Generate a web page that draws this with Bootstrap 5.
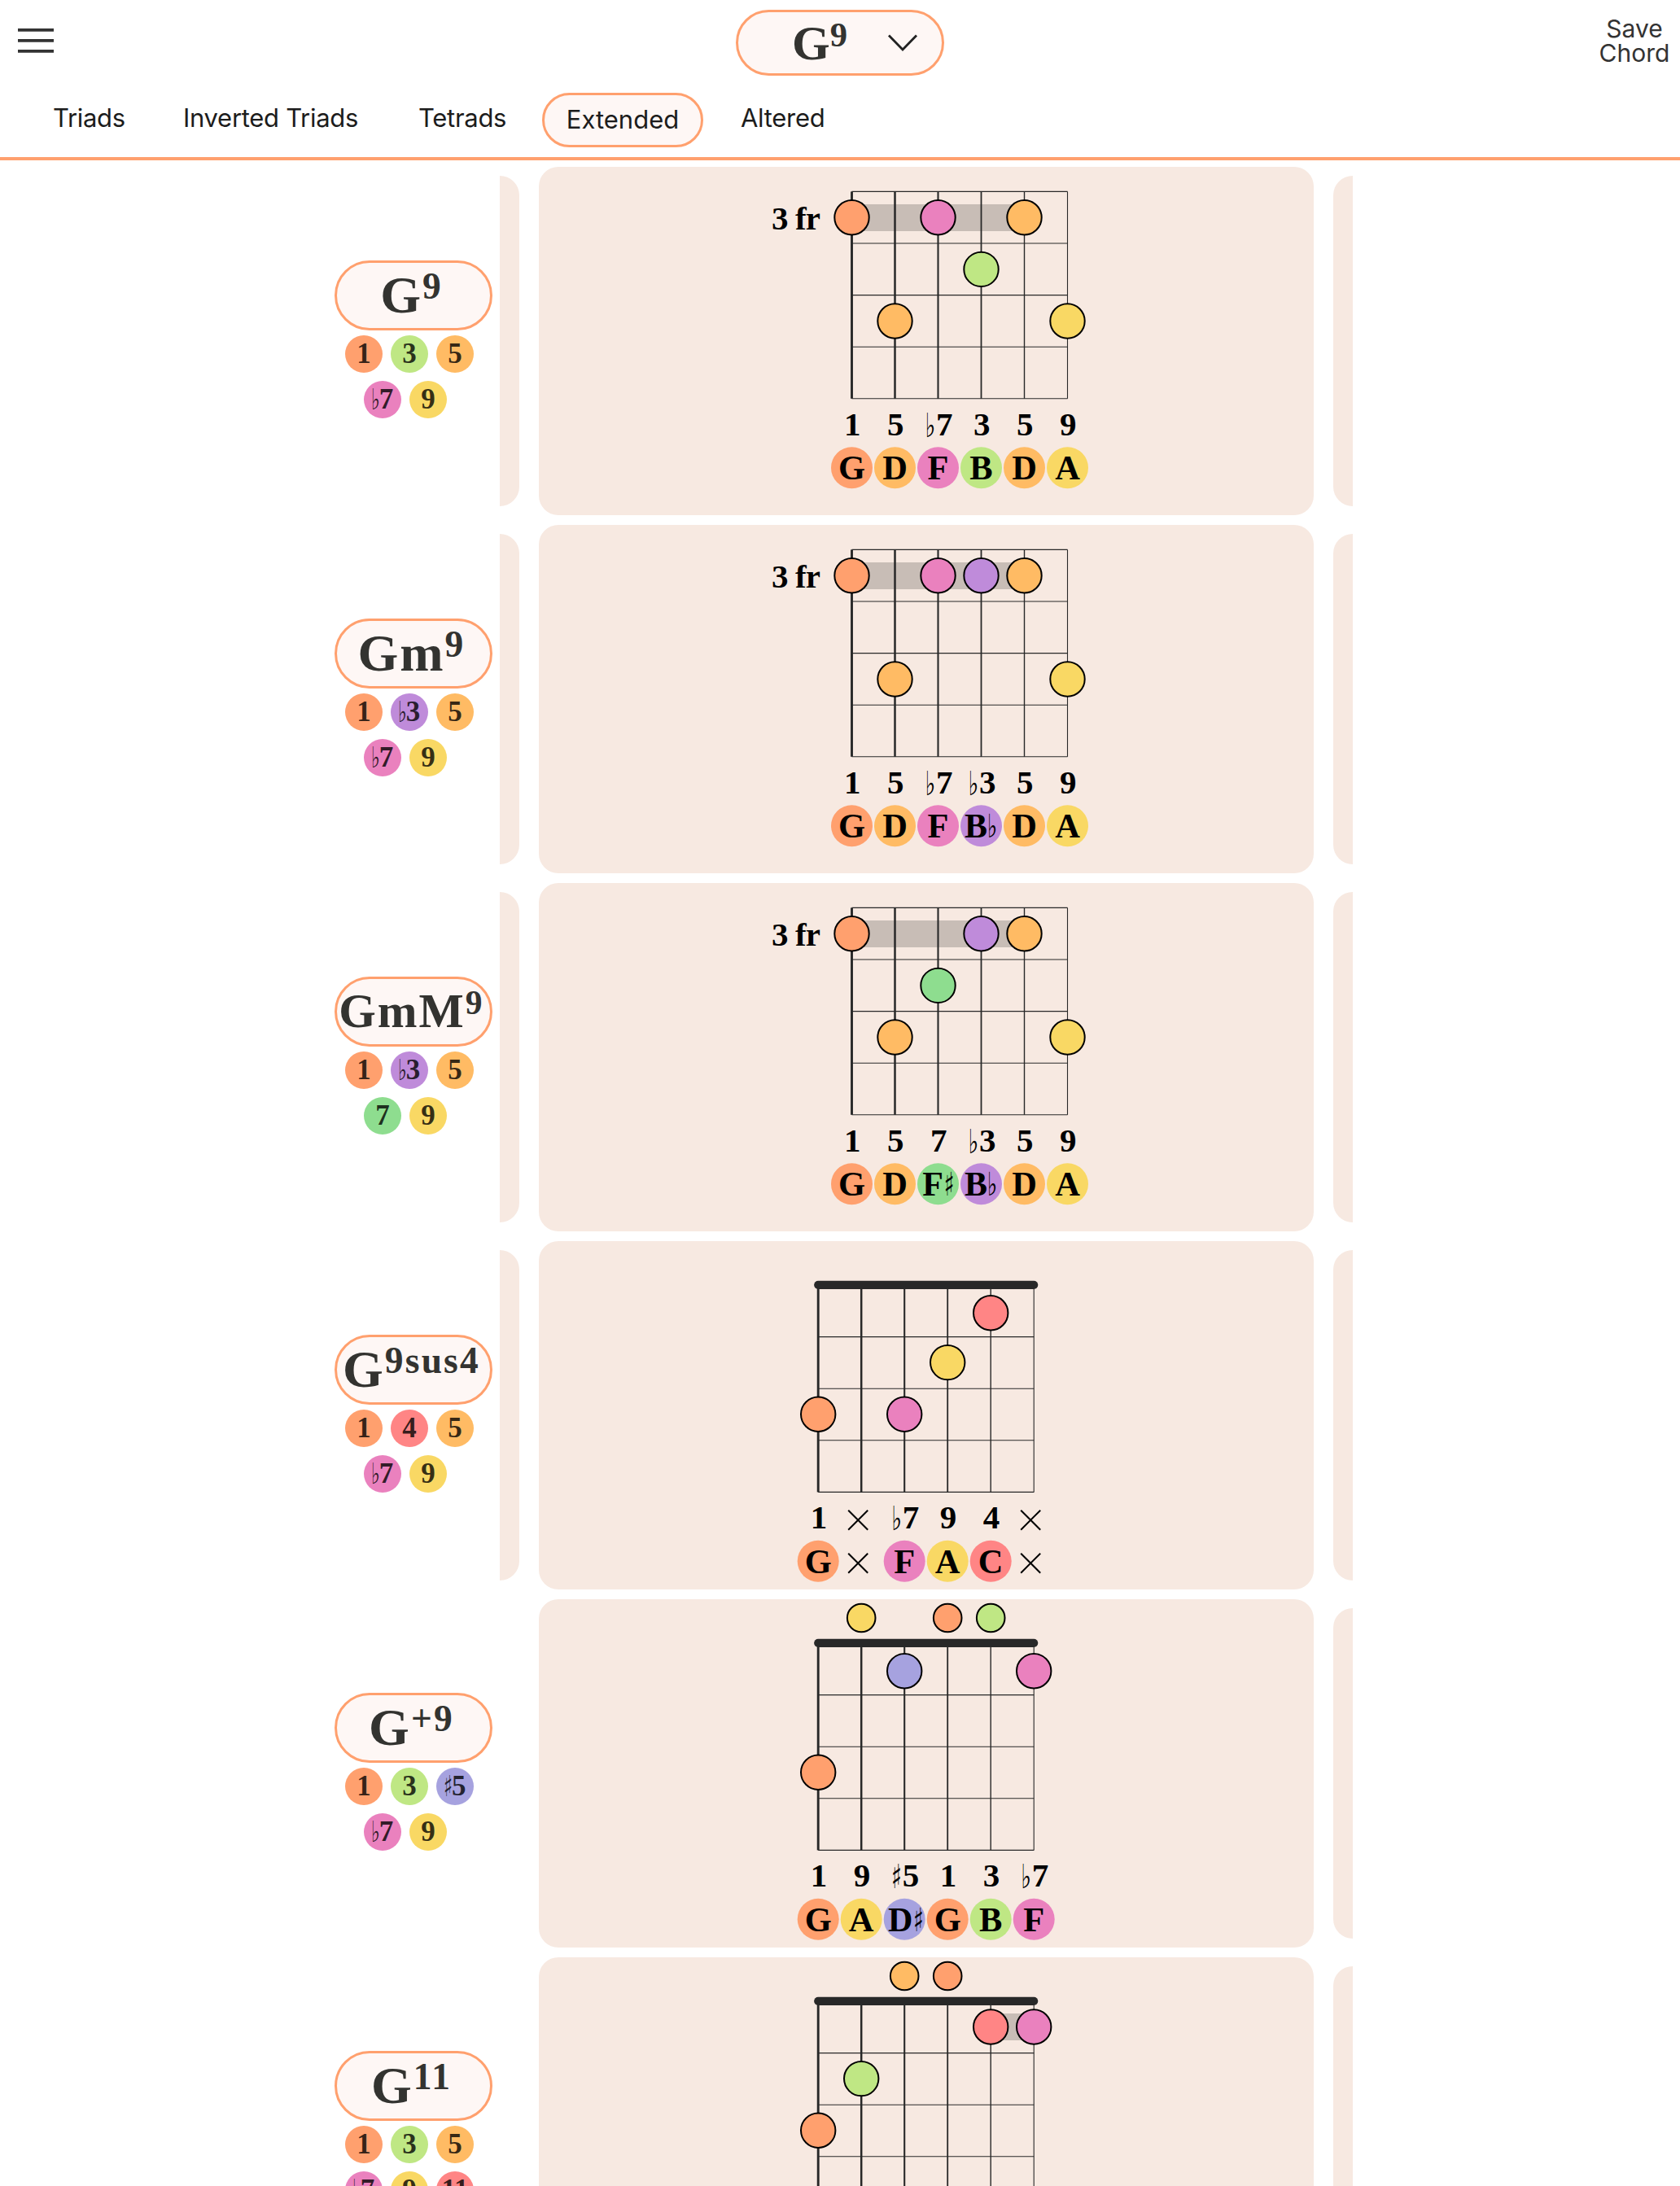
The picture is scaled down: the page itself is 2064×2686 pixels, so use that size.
<!DOCTYPE html>
<html lang="en">
<head>
<meta charset="utf-8">
<meta name="viewport" content="width=device-width, initial-scale=1">
<title>Chords</title>
<link rel="stylesheet" href="https://cdn.jsdelivr.net/npm/bootstrap@5.3.0/dist/css/bootstrap.min.css">
<style>
  :root { --accent: #ffa06e; --panel: #f7e9e1; --pill: #fef7f5; }
  html, body { height: 2686px; overflow: hidden; }
  body { background: #fff; font-family: Inter, "Liberation Sans", sans-serif; color: #1c1c1c; }
  .serif, svg text { font-family: "Liberation Serif", serif; font-weight: 700; }
  .app-header { height: 197px; border-bottom: 4px solid var(--accent); }
  .chord-list { height: 2489px; overflow: hidden; }
  .top-row { height: 94px; padding: 12px 11px 0 22px; }
  .side { flex: 1 1 0; }
  .pill { background: var(--pill); border: 3px solid var(--accent); border-radius: 43px; color: #333330; line-height: 1; white-space: nowrap; }
  .picker { width: 256px; height: 81px; }
  .picker .chord { width: 126px; padding-left: 66px; font-size: 60px; }
  .chord { font-size: 64px; }
  .spaced { letter-spacing: 2px; }
  .chord .ext { display: inline-block; font-size: .71em; line-height: 1; position: relative; top: -.37em; }
  .spaced .ext { letter-spacing: 2.2px; }
  .save-btn { font-size: 30px; line-height: 30px; color: #333; border: 0; background: none; margin-top: 8px; width: 90px; }
  .save-btn span { line-height: 30px; height: 30px; }
  .tabs { padding: 20px 0 0 38px; font-size: 31px; letter-spacing: -.3px; line-height: 34px; height: 99px; }
  .tab { height: 62px; padding-top: 14px; }
  .tab.active { width: 198px; height: 67px; padding-top: 14px; border-radius: 34px; color: #1c1c1c; text-align: center; letter-spacing: 0; }
  .chord-row { height: 428px; margin-bottom: 12px; }
  .names { width: 204px; margin-left: 411px; padding-top: 115px; margin-right: -1px; }
  .names .pill { width: 194px; height: 86px; padding-right: 5px; }
  .chips { padding-top: 6px; width: 194px; }
  .chip-line { gap: 10px; padding-right: 10px; margin-bottom: 10px; }
  .chip-line.short { padding-right: 20px; }
  .chip { width: 46px; height: 46px; font-size: 35px; line-height: 46px; color: rgba(0,0,0,.8); white-space: nowrap; }
  .acc { font-family: "DejaVu Sans", sans-serif; font-weight: 400; font-size: 1.02em; line-height: 1; display: inline-block; transform: scaleX(.65); margin: 0 -.11em; }
  .sliver { width: 24px; height: 406px; margin-top: 11px; background: var(--panel); }
  .sliver.l { border-radius: 0 24px 24px 0; }
  .sliver.r { border-radius: 24px 0 0 24px; }
  .panel { width: 952px; height: 428px; margin: 0 24px; background: var(--panel); border-radius: 24px; }
  .panel svg { display: block; }
</style>
<script src="https://cdn.jsdelivr.net/npm/bootstrap@5.3.0/dist/js/bootstrap.bundle.min.js"></script>
</head>
<body>
<header class="app-header">
  <div class="top-row d-flex align-items-start">
    <div class="side">
      <svg class="d-block" width="44" height="30" viewBox="0 0 44 30" style="margin-top:23px" fill="#333"><path d="M0 0h44v3.7H0zM0 13h44v3.7H0zM0 26h44v3.7H0z"/></svg>
    </div>
    <div class="pill picker d-flex align-items-center" style="margin-left:-11px">
      <span class="chord serif">G<span class="ext">9</span></span>
      <svg width="38" height="24" viewBox="0 0 38 24" style="margin-left:57px" fill="none" stroke="#222" stroke-width="2.8"><path d="M2 2.5 19 20 36 2.5"/></svg>
    </div>
    <div class="side d-flex justify-content-end"><button class="save-btn p-0 d-flex flex-column align-items-center"><span>Save</span><span>Chord</span></button></div>
  </div>
  <nav class="tabs d-flex align-items-start">
    <div class="tab" style="width:161px;padding-left:27px">Triads</div>
    <div class="tab" style="width:288px;padding-left:26px">Inverted Triads</div>
    <div class="tab" style="width:179px;padding-left:27px">Tetrads</div>
    <div class="tab active pill">Extended</div>
    <div class="tab" style="padding-left:46px">Altered</div>
  </nav>
</header>
<main id="list" class="chord-list pt-2"></main>
<script>
const C = { '1':'#ffa06e','3':'#bfe784','5':'#ffbb64','♭7':'#ea81be','9':'#f9d864','♭3':'#bf8bda','7':'#8edd8f','4':'#ff8585','11':'#ff8585','♯5':'#a6a2df' };
// per string: [interval, note, fret]; fret 0 = open string, null = muted
const chords = [
  { name:['G','9'], chips:['1','3','5','♭7','9'], fr:3, barre:[0,4], left:1,
    s:[['1','G',1],['5','D',3],['♭7','F',1],['3','B',2],['5','D',1],['9','A',3]] },
  { name:['Gm','9'], chips:['1','♭3','5','♭7','9'], fr:3, barre:[0,4], left:1,
    s:[['1','G',1],['5','D',3],['♭7','F',1],['♭3','B♭',1],['5','D',1],['9','A',3]] },
  { name:['GmM','9'], chips:['1','♭3','5','7','9'], fr:3, barre:[0,4], left:1, size:58.5,
    s:[['1','G',1],['5','D',3],['7','F♯',2],['♭3','B♭',1],['5','D',1],['9','A',3]] },
  { name:['G','9sus4'], chips:['1','4','5','♭7','9'], left:1,
    s:[['1','G',3],null,['♭7','F',3],['9','A',2],['4','C',1],null] },
  { name:['G','+9'], chips:['1','3','♯5','♭7','9'],
    s:[['1','G',3],['9','A',0],['♯5','D♯',1],['1','G',0],['3','B',0],['♭7','F',1]] },
  { name:['G','11'], chips:['1','3','5','♭7','9','11'], barre:[4,5],
    s:[['1','G',3],['3','B',2],['5','D',0],['1','G',0],['4','C',1],['♭7','F',1]] }
];
const W = [2.9,2.5,2.1,1.8,1.4,1.1];
const acc = (ch,x,y,h) => `<text transform="translate(${x} ${y}) scale(.65 1)" text-anchor="middle" font-size="${h}" style="font-family:'DejaVu Sans',sans-serif;font-weight:400">${ch}</text>`;
function degree(t,x,y) {
  if (t.length > 1) return acc(t[0],x-10.5,y+2,41) + `<text x="${x+7}" y="${y}" text-anchor="middle" font-size="41">${t[1]}</text>`;
  return `<text x="${x}" y="${y}" text-anchor="middle" font-size="41">${t}</text>`;
}
function note(t,x,y) {
  if (t.length > 1) {
    const d = t[0]==='D' ? 5 : 6.5;
    return `<text x="${x-d}" y="${y}" text-anchor="middle" font-size="42">${t[0]}</text>` + acc(t[1],x+(t[0]==='D'?17:13.5),y,40);
  }
  return `<text x="${x}" y="${y}" text-anchor="middle" font-size="42.5">${t}</text>`;
}
function diagram(c) {
  const nut = !c.fr, x0 = nut ? 343.2 : 384.5, y0 = nut ? 54 : 30.4, X = i => x0 + 53*i, F = 63.6;
  let o = '';
  if (c.barre) o += `<rect x="${X(c.barre[0])}" y="${nut?69:46}" width="${53*(c.barre[1]-c.barre[0])}" height="33" fill="#000" fill-opacity=".19"/>`;
  for (let f = 0; f < 5; f++) o += `<line x1="${X(0)}" x2="${X(5)}" y1="${y0+F*f}" y2="${y0+F*f}" stroke="#282828" stroke-width="1.1"/>`;
  for (let i = 0; i < 6; i++) o += `<line x1="${X(i)}" x2="${X(i)}" y1="${y0}" y2="${y0+4*F}" stroke="#282828" stroke-width="${W[i]}"/>`;
  if (nut) o += `<line x1="${X(0)}" x2="${X(5)}" y1="53.8" y2="53.8" stroke="#282828" stroke-width="10.2" stroke-linecap="round"/>`;
  else o += `<text x="286" y="76.8" font-size="41" textLength="60" lengthAdjust="spacing">${c.fr} fr</text>`;
  const ly = nut ? 353 : 330, ny = nut ? 408 : 384.3, cy = nut ? 393.2 : 369.7;
  c.s.forEach((s,i) => {
    const x = X(i);
    if (!s) {
      for (const y of [342.7,395.7]) o += `<path d="M${x-16} ${y-12}l24 24m0-24l-24 24" stroke="#000" stroke-width="2" fill="none"/>`;
      return;
    }
    const [d,n,f] = s;
    const y = f === 0 ? 23 : y0 - F/2 + F*f + (nut ? (f===1 && !c.barre ? 2.5 : -.3) : .1);
    o += `<circle cx="${x}" cy="${y}" r="${f===0?17.3:21.2}" fill="${C[d]}" stroke="#000" stroke-width="2"/>`;
    o += `<circle cx="${x}" cy="${cy}" r="25.5" fill="${C[d]}"/>` + degree(d,x+.8,ly) + note(n,x,ny);
  });
  return `<svg width="952" height="428" viewBox="0 0 952 428">${o}</svg>`;
}
const chip = t => `<span class="chip rounded-circle text-center serif d-flex justify-content-center align-items-center" style="background:${C[t]}">${t.replace(/[♭♯]/,'<span class="acc">$&</span>')}</span>`;
const line = a => `<div class="chip-line d-flex justify-content-center${a.length<3?' short':''}">${a.map(chip).join('')}</div>`;
document.getElementById('list').innerHTML = chords.map(c => `
  <section class="chord-row d-flex">
    <div class="names flex-shrink-0">
      <div class="pill d-flex align-items-center justify-content-center"><span class="chord serif spaced"${c.size?` style="font-size:${c.size}px"`:''}>${c.name[0]}<span class="ext">${c.name[1]}</span></span></div>
      <div class="chips">${line(c.chips.slice(0,3))}${line(c.chips.slice(3))}</div>
    </div>
    <div class="sliver l flex-shrink-0${c.left?'':' invisible'}"></div>
    <div class="panel flex-shrink-0">${diagram(c)}</div>
    <div class="sliver r flex-shrink-0"></div>
  </section>`).join('');
</script>
</body>
</html>
